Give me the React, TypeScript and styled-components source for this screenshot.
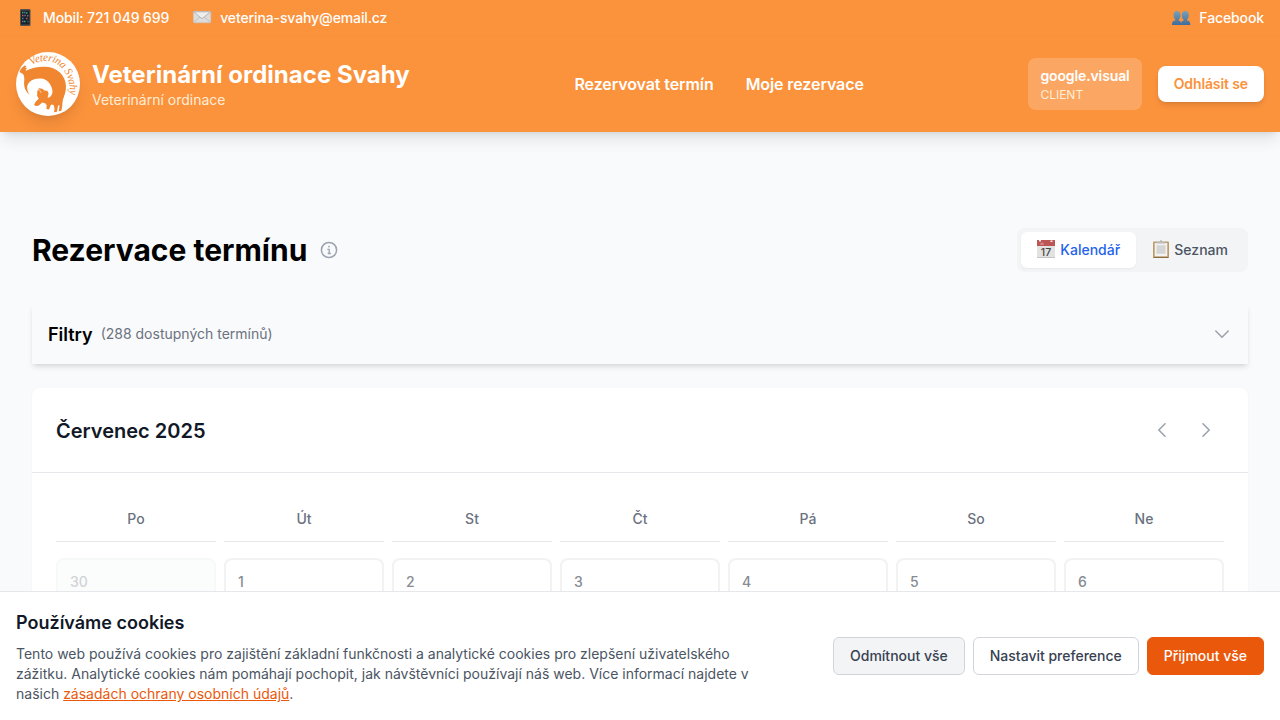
import React from "react";
import styled, { createGlobalStyle } from "styled-components";

const GlobalStyle = createGlobalStyle`
  *, *::before, *::after { box-sizing: border-box; }
  body {
    margin: 0;
    background: #f9fafb;
    font-family: Inter, "Liberation Sans", sans-serif;
    font-size: 16px;
    line-height: 24px;
    -webkit-font-smoothing: antialiased;
  }
  h1, h2, h3, p { margin: 0; }
  button { font: inherit; border: 0; background: none; cursor: pointer; }
  a { color: inherit; text-decoration: none; }
  svg { display: block; flex-shrink: 0; }
`;

const Page = styled.div`
  height: 100vh;
  overflow: hidden;
`;

const Header = styled.header`
  background: #fb923c;
  color: #fff;
  box-shadow: 0 10px 15px -3px rgba(0, 0, 0, 0.1), 0 4px 6px -4px rgba(0, 0, 0, 0.1);
  position: relative;
`;

const ContactBar = styled.div`
  display: flex;
  justify-content: space-between;
  align-items: center;
  height: 36px;
  padding: 0 16px;
  font-size: 14px;
  line-height: 20px;
  font-weight: 500;
  letter-spacing: -0.12px;
  box-shadow: inset 0 -1px 0 rgba(249, 115, 22, 0.06);
`;

const ContactGroup = styled.div`
  display: flex;
  gap: 24px;
`;

const ContactLink = styled.a`
  display: flex;
  align-items: center;
  gap: 8px;
`;

const MainBar = styled.div`
  display: flex;
  justify-content: space-between;
  align-items: center;
  height: 96px;
  padding: 0 16px;
`;

const Brand = styled.div`
  display: flex;
  align-items: center;
  gap: 12px;
`;

const LogoFrame = styled.div`
  width: 64px;
  height: 64px;
  border-radius: 50%;
  background: #fff;
  box-shadow: 0 10px 15px -3px rgba(0, 0, 0, 0.1), 0 4px 6px -4px rgba(0, 0, 0, 0.1);
`;

const BrandName = styled.div`
  padding-top: 1px;
  font-size: 24px;
  line-height: 31px;
  font-weight: 700;
  letter-spacing: 0.02px;
`;

const BrandNote = styled.div`
  font-size: 14px;
  line-height: 20px;
  color: #ffedd5;
`;

const Nav = styled.nav`
  display: flex;
  gap: 32px;
  font-weight: 600;
  letter-spacing: -0.09px;
`;

const Account = styled.div`
  display: flex;
  align-items: center;
  gap: 16px;
`;

const UserBadge = styled.div`
  height: 52px;
  padding: 8px 12px;
  border-radius: 8px;
  background: rgba(255, 255, 255, 0.2);
`;

const UserName = styled.div`
  font-size: 14px;
  line-height: 20px;
  font-weight: 600;
  letter-spacing: -0.12px;
`;

const UserRole = styled.div`
  padding-top: 1px;
  font-size: 12px;
  line-height: 16px;
  color: #ffedd5;
`;

const LogoutButton = styled.button`
  height: 36px;
  padding: 0 16px;
  border-radius: 8px;
  background: #fff;
  color: #fb923c;
  font-size: 14px;
  font-weight: 600;
  letter-spacing: -0.11px;
  box-shadow: 0 4px 6px -1px rgba(0, 0, 0, 0.1), 0 2px 4px -2px rgba(0, 0, 0, 0.1);
`;

const Main = styled.main`
  padding: 96px 32px 0;
`;

const TitleRow = styled.div`
  display: flex;
  justify-content: space-between;
  align-items: center;
  margin-bottom: 32px;
`;

const TitleGroup = styled.div`
  display: flex;
  align-items: center;
  gap: 12px;
  color: #9ca3af;
`;

const Title = styled.h1`
  font-size: 30px;
  line-height: 36px;
  font-weight: 700;
  color: #000;
`;

const ViewSwitch = styled.div`
  display: flex;
  padding: 4px;
  border-radius: 8px;
  background: #f3f4f6;
`;

const ViewButton = styled.button<{ $active?: boolean }>`
  display: flex;
  align-items: center;
  gap: 4px;
  height: 36px;
  min-width: ${(p) => (p.$active ? "115px" : "0")};
  padding: 0 16px;
  border-radius: 6px;
  font-size: 14px;
  font-weight: 500;
  color: ${(p) => (p.$active ? "#2563eb" : "#4b5563")};
  background: ${(p) => (p.$active ? "#fff" : "transparent")};
  box-shadow: ${(p) => (p.$active ? "0 1px 2px rgba(0, 0, 0, 0.05)" : "none")};
`;

const Filters = styled.section`
  display: flex;
  align-items: center;
  height: 60px;
  padding: 0 16px;
  margin-bottom: 24px;
  background: #f9fafb;
  box-shadow: 0 4px 6px -1px rgba(0, 0, 0, 0.1), 0 2px 4px -2px rgba(0, 0, 0, 0.1);
  color: #9ca3af;
`;

const FiltersTitle = styled.h2`
  padding-top: 2px;
  font-size: 18px;
  line-height: 28px;
  font-weight: 600;
  color: #000;
`;

const FiltersCount = styled.span`
  flex: 1;
  margin-left: 8px;
  font-size: 14px;
  line-height: 20px;
  color: #6b7280;
`;

const Calendar = styled.section`
  border-radius: 8px;
  background: #fff;
  box-shadow: 0 1px 2px rgba(0, 0, 0, 0.05);
`;

const CalendarHeader = styled.div`
  display: flex;
  justify-content: space-between;
  align-items: center;
  padding: 24px;
  border-bottom: 1px solid #e5e7eb;
`;

const MonthTitle = styled.h2`
  padding-top: 2px;
  font-size: 20px;
  line-height: 28px;
  font-weight: 600;
  color: #111827;
`;

const MonthNav = styled.div`
  display: flex;
  gap: 8px;
`;

const ArrowButton = styled.button`
  height: 36px;
  padding: 8px;
  color: #9ca3af;
`;

const CalendarBody = styled.div`
  padding: 24px;
`;

const WeekGrid = styled.div`
  display: grid;
  grid-template-columns: repeat(7, 1fr);
  gap: 8px;
  & + & { margin-top: 16px; }
`;

const Weekday = styled.div`
  padding: 12px 0;
  border-bottom: 1px solid #e5e7eb;
  text-align: center;
  font-size: 14px;
  line-height: 20px;
  font-weight: 500;
  color: #6b7280;
`;

const DayCell = styled.div<{ $outside?: boolean }>`
  height: 120px;
  padding: 12px;
  border: 2px solid ${(p) => (p.$outside ? "#f7f8f8" : "#f2f2f3")};
  border-radius: 8px;
  background: ${(p) => (p.$outside ? "#fbfdfc" : "#fff")};
  font-size: 14px;
  line-height: 20px;
  font-weight: 500;
  color: ${(p) => (p.$outside ? "#d0d3d8" : "#888b92")};
`;

const CookieBanner = styled.aside`
  position: fixed;
  left: 0;
  right: 0;
  bottom: 0;
  display: flex;
  justify-content: space-between;
  align-items: center;
  padding: 16px;
  border-top: 1px solid #e5e7eb;
  background: #fff;
`;

const CookieText = styled.div`
  width: 768px;
  font-size: 14px;
  line-height: 20px;
  color: #4b5563;
`;

const CookieTitle = styled.h3`
  padding-top: 1px;
  margin-bottom: 8px;
  font-size: 18px;
  line-height: 27px;
  font-weight: 600;
  color: #111827;
`;

const PolicyLink = styled.a`
  color: #ea580c;
  text-decoration: underline;
`;

const CookieActions = styled.div`
  display: flex;
  gap: 8px;
`;

const CookieButton = styled.button<{ $tone: "muted" | "plain" | "primary" }>`
  height: 38px;
  padding: 0 16px;
  border-radius: 6px;
  border: 1px solid ${(p) => (p.$tone === "primary" ? "#ea580c" : "#d1d5db")};
  background: ${(p) => ({ muted: "#f3f4f6", plain: "#fff", primary: "#ea580c" })[p.$tone]};
  color: ${(p) => (p.$tone === "primary" ? "#fff" : "#374151")};
  font-size: 14px;
  font-weight: 500;
  white-space: nowrap;
`;

const LogoText = styled.text`
  font-family: "Liberation Serif", serif;
  font-style: italic;
  font-size: 11px;
  fill: #f0862f;
`;

const Logo = () => (
  <svg width="64" height="64" viewBox="0 0 64 64">
    <g fill="#f0862f">
      <path d="M3.500 20C4 17.500 6 15.500 8.500 13.500l2 .8-1.500 1.500 2.300.2-1.600 1.500.3 1.300C16 15.800 23 14.300 30 14.800 41 15.500 49.500 23 50 34c.2 5-1.700 9.500-3 13.500-1 3.500-.3 8-1.800 11.500l-2.400.3.700-6-1.500.2-1 6.300-3 .4.600-3.500-.9-3.700-2.600-.4-2.200 5-2.500-.6.300-3.800-1.500-2-3-.6-3.700 3.200-3.200.2-1.200-1.500 1.800-3 2.800-2.800-1.600-3 .2-4.500 1.500-3 3.500.6 2 1.700 3 .3 1.300 2.500-1 4.500c3.500-.4 5.600-4 4.600-8.500C34.900 31.300 30.500 27 25 26.500 18 25.900 12.500 29 11.300 34c-.6 3 .5 6 2.200 8.500C9.300 39.500 7.600 34.500 8.200 29c.2-2.500.3-4.500-1.200-7z" />
    </g>
    <path d="M21.500 37.500c1.700 0 3 1.200 3.700 3.200M19.500 47.800l1 .2" fill="none" stroke="#fff" strokeWidth=".7" />
    <path id="logoArc" d="M15.500 13.500C26 5.500 42 8 49 20.500C54 29 55.500 40 52 51" fill="none" />
    <LogoText>
      <textPath href="#logoArc" textLength="62">Veterina Svahy</textPath>
    </LogoText>
  </svg>
);

const PhoneIcon = () => (
  <svg width="19" height="18" viewBox="0 0 19 18">
    <rect x="4" y="0" width="10.500" height="17" rx="1.300" fill="#5b514a" />
    <rect x="5" y="1.500" width="8.500" height="14" fill="#17232d" />
    <path d="M6 3.500h1.500M10 4h1.500M8 12.500h1.500" stroke="#48a567" strokeWidth="1.500" />
    <path d="M8 3.500h1.500M6 9.500h1.500M11.500 12.500h1" stroke="#3c7aa6" strokeWidth="1.500" />
    <path d="M6 6.500h1.500M10 9.500h1.500" stroke="#b5614d" strokeWidth="1.500" />
    <path d="M8.300 6.500h1.500M11 6.800h1.500M6 12.500h1.500" stroke="#7f6c91" strokeWidth="1.500" />
  </svg>
);

const MailIcon = () => (
  <svg width="19" height="18" viewBox="0 0 19 18">
    <rect x=".3" y="2.300" width="17.500" height="11.500" rx=".5" fill="#dcdcdc" stroke="#c5bfb9" strokeWidth=".6" />
    <path d="M.7 13.300 6.800 8M17.500 13.300 11.300 8" stroke="#b8b8b8" strokeWidth=".8" />
    <path d="M.7 2.800 8 9q1 .8 2 0L17.500 2.800z" fill="#eee" stroke="#aaa" strokeWidth=".8" />
  </svg>
);

const PeopleIcon = () => (
  <svg width="19" height="18" viewBox="0 0 19 18">
    <defs>
      <linearGradient id="people" x1="0" y1="0" x2="0" y2="1">
        <stop offset="0" stopColor="#7ca0b8" />
        <stop offset="1" stopColor="#3e6d9a" />
      </linearGradient>
    </defs>
    <path d="M5 2c2 0 3.500 1.500 3.500 4 0 2-.6 3.600-1.700 4.500v1.200c1.500.4 2.600.8 2.600 4.300H0c0-3.500 1.200-4 3.200-4.400v-1.200C2 9.500 1.500 8 1.500 6 1.500 3.500 3 2 5 2z" fill="url(#people)" />
    <path d="M13.300 2c2 0 3.500 1.500 3.500 4 0 2-.5 3.500-1.700 4.400v1.200c2 .4 3.200.9 3.200 4.400H9c0-3.500 1-3.900 2.500-4.300v-1.200C10.400 9.600 9.800 8 9.800 6c0-2.500 1.500-4 3.500-4z" fill="url(#people)" />
  </svg>
);

const DigitText = styled.text`
  font-family: Inter, sans-serif;
  font-size: 10.5px;
  font-weight: 500;
  fill: #454545;
`;

const CalendarIcon = () => (
  <svg width="19" height="20" viewBox="0 0 19 20">
    <rect x="0" y="0" width="18" height="18" fill="#e2e2e0" />
    <rect x="0" y="0" width="18" height="6" fill="#bd5555" />
    <path d="M3 4h4M5 2.500v2" stroke="#d69a9a" />
    <path d="M2 .8h2M13.500 1.200h2" stroke="#f6eeee" strokeWidth="1.600" />
    <path d="M0 17.500h18" stroke="#c4c4c2" />
    <DigitText x="9" y="15.800" textAnchor="middle">17</DigitText>
  </svg>
);

const ClipboardIcon = () => (
  <svg width="18" height="20" viewBox="0 0 18 20">
    <rect x="1" y="1.500" width="16" height="16.500" rx="1" fill="#bf9b6c" />
    <path d="M1.500 17.500h15" stroke="#8d6b45" />
    <rect x="2.700" y="3" width="12.600" height="13.300" fill="#f2f2f1" />
    <rect x="4.500" y="5.300" width="9" height="8.500" fill="#d5d5d6" />
    <path d="M4.500 3.500V2h3L8.200.3h1.600l.7 1.700h3v1.500z" fill="#b9bcba" />
  </svg>
);

const InfoIcon = () => (
  <svg width="20" height="20" viewBox="0 0 20 20" fill="none" stroke="currentColor" strokeWidth="1.500">
    <circle cx="10" cy="10" r="7.600" />
    <path d="M8.300 9.300h1.900v4M8.700 13.500h3.100" strokeWidth="1.300" />
    <circle cx="10" cy="6.600" r=".9" fill="currentColor" stroke="none" />
  </svg>
);

const arrowPaths = {
  down: "m3.800 7 6.200 6.200L16.200 7",
  left: "M13 3.800 6.800 10l6.200 6.200",
  right: "m7 3.800 6.200 6.200L7 16.200",
};

const Chevron = ({ to }: { to: keyof typeof arrowPaths }) => (
  <svg width="20" height="20" viewBox="0 0 20 20" fill="none" stroke="currentColor" strokeWidth="1.600" strokeLinecap="round" strokeLinejoin="round">
    <path d={arrowPaths[to]} />
  </svg>
);

const weekdays = ["Po", "Út", "St", "Čt", "Pá", "So", "Ne"];
const days = [30, 1, 2, 3, 4, 5, 6];

export default function App() {
  return (
    <Page>
      <GlobalStyle />
      <Header>
        <ContactBar>
          <ContactGroup>
            <ContactLink href="#"><PhoneIcon />Mobil: 721 049 699</ContactLink>
            <ContactLink href="#"><MailIcon />veterina-svahy@email.cz</ContactLink>
          </ContactGroup>
          <ContactLink href="#"><PeopleIcon />Facebook</ContactLink>
        </ContactBar>
        <MainBar>
          <Brand>
            <LogoFrame><Logo /></LogoFrame>
            <div>
              <BrandName>Veterinární ordinace Svahy</BrandName>
              <BrandNote>Veterinární ordinace</BrandNote>
            </div>
          </Brand>
          <Nav>
            <a href="#">Rezervovat termín</a>
            <a href="#">Moje rezervace</a>
          </Nav>
          <Account>
            <UserBadge>
              <UserName>google.visual</UserName>
              <UserRole>CLIENT</UserRole>
            </UserBadge>
            <LogoutButton>Odhlásit se</LogoutButton>
          </Account>
        </MainBar>
      </Header>
      <Main>
        <TitleRow>
          <TitleGroup>
            <Title>Rezervace termínu</Title>
            <InfoIcon />
          </TitleGroup>
          <ViewSwitch>
            <ViewButton $active><CalendarIcon />Kalendář</ViewButton>
            <ViewButton><ClipboardIcon />Seznam</ViewButton>
          </ViewSwitch>
        </TitleRow>
        <Filters>
          <FiltersTitle>Filtry</FiltersTitle>
          <FiltersCount>(288 dostupných termínů)</FiltersCount>
          <Chevron to="down" />
        </Filters>
        <Calendar>
          <CalendarHeader>
            <MonthTitle>Červenec 2025</MonthTitle>
            <MonthNav>
              <ArrowButton aria-label="Předchozí měsíc"><Chevron to="left" /></ArrowButton>
              <ArrowButton aria-label="Další měsíc"><Chevron to="right" /></ArrowButton>
            </MonthNav>
          </CalendarHeader>
          <CalendarBody>
            <WeekGrid>
              {weekdays.map((d) => <Weekday key={d}>{d}</Weekday>)}
            </WeekGrid>
            <WeekGrid>
              {days.map((d) => <DayCell key={d} $outside={d === 30}>{d}</DayCell>)}
            </WeekGrid>
          </CalendarBody>
        </Calendar>
      </Main>
      <CookieBanner>
        <CookieText>
          <CookieTitle>Používáme cookies</CookieTitle>
          <p>
            Tento web používá cookies pro zajištění základní funkčnosti a analytické cookies pro zlepšení uživatelského
            zážitku. Analytické cookies nám pomáhají pochopit, jak návštěvníci používají náš web. Více informací najdete v
            našich <PolicyLink href="#">zásadách ochrany osobních údajů</PolicyLink>.
          </p>
        </CookieText>
        <CookieActions>
          <CookieButton $tone="muted">Odmítnout vše</CookieButton>
          <CookieButton $tone="plain">Nastavit preference</CookieButton>
          <CookieButton $tone="primary">Přijmout vše</CookieButton>
        </CookieActions>
      </CookieBanner>
    </Page>
  );
}
